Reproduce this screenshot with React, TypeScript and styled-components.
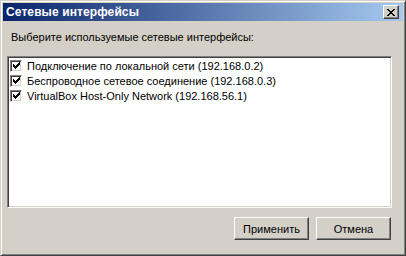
import React from "react";
import styled, { createGlobalStyle } from "styled-components";

const Global = createGlobalStyle`
  html, body { margin: 0; padding: 0; background: #d4d0c8; }
  body { font-family: "Liberation Sans", Arial, sans-serif; font-size: 11px; }
`;

const Window = styled.div`
  width: 406px;
  height: 256px;
  box-sizing: border-box;
  background: #d4d0c8;
  border-top: 1px solid #d4d0c8;
  border-left: 1px solid #d4d0c8;
  border-right: 1px solid #404040;
  border-bottom: 1px solid #404040;
  box-shadow: inset 1px 1px 0 #ffffff, inset -1px -1px 0 #808080;
  padding: 2px;
  display: flex;
  flex-direction: column;
`;

const TitleBar = styled.div`
  height: 18px;
  background: linear-gradient(to right, #0a246a, #a6caf0);
  display: flex;
  align-items: center;
  justify-content: space-between;
  padding: 0 4px 0 3px;
`;

const Title = styled.span`
  color: #fff;
  font-family: "Liberation Sans", Arial, sans-serif;
  font-weight: bold;
  font-size: 12px;
  letter-spacing: 0.1px;
`;

const CloseBtn = styled.div`
  width: 16px;
  height: 14px;
  box-sizing: border-box;
  background: #d4d0c8;
  border-top: 1px solid #fff;
  border-left: 1px solid #fff;
  border-right: 1px solid #404040;
  border-bottom: 1px solid #404040;
  box-shadow: inset -1px -1px 0 #808080;
  display: flex;
  align-items: center;
  justify-content: center;
`;

const Body = styled.div`
  flex: 1;
  display: flex;
  flex-direction: column;
  padding: 9px 11px 13px 4px;
`;

const Label = styled.div`
  font-family: "Liberation Sans", Arial, sans-serif;
  font-size: 11px;
  color: #000;
  padding-left: 4px;
  height: 15px;
  line-height: 15px;
`;

const ListBox = styled.div`
  margin-top: 11px;
  height: 152px;
  box-sizing: border-box;
  background: #fff;
  border-top: 1px solid #808080;
  border-left: 1px solid #808080;
  border-right: 1px solid #fff;
  border-bottom: 1px solid #fff;
  box-shadow: inset 1px 1px 0 #404040, inset -1px -1px 0 #d4d0c8;
  padding: 1px 2px;
  display: flex;
  flex-direction: column;
`;

const Item = styled.label`
  display: flex;
  align-items: center;
  height: 15px;
  gap: 5px;
  font-family: "Liberation Sans", Arial, sans-serif;
  font-size: 11px;
  color: #000;
`;

const Check = styled.span`
  width: 12px;
  height: 12px;
  flex: none;
  box-sizing: border-box;
  background: #fff;
  border-top: 1px solid #808080;
  border-left: 1px solid #808080;
  border-right: 1px solid #fff;
  border-bottom: 1px solid #fff;
  box-shadow: inset 1px 1px 0 #404040, inset -1px -1px 0 #d4d0c8;
  display: flex;
  align-items: center;
  justify-content: center;
`;

const Footer = styled.div`
  margin-top: auto;
  display: flex;
  justify-content: flex-end;
  gap: 7px;
  padding-right: 1px;
`;

const Button = styled.button`
  width: 75px;
  height: 23px;
  box-sizing: border-box;
  background: #d4d0c8;
  border-top: 1px solid #fff;
  border-left: 1px solid #fff;
  border-right: 1px solid #404040;
  border-bottom: 1px solid #404040;
  box-shadow: inset -1px -1px 0 #808080;
  font-family: "Liberation Sans", Arial, sans-serif;
  font-size: 11px;
  color: #000;
  padding: 0;
`;

const CheckMark = () => (
  <svg width="7" height="7" viewBox="0 0 7 7" shapeRendering="crispEdges">
    <path
      d="M0 2h1v3H0zM1 3h1v3H1zM2 4h1v3H2zM3 3h1v3H3zM4 2h1v3H4zM5 1h1v3H5zM6 0h1v3H6z"
      fill="#000"
    />
  </svg>
);

const items = [
  "Подключение по локальной сети (192.168.0.2)",
  "Беспроводное сетевое соединение (192.168.0.3)",
  "VirtualBox Host-Only Network (192.168.56.1)",
];

export default function App() {
  return (
    <>
      <Global />
      <Window>
        <TitleBar>
          <Title>Сетевые интерфейсы</Title>
          <CloseBtn>
            <svg width="8" height="7" viewBox="0 0 8 7" shapeRendering="crispEdges">
              <path
                d="M0 0h2v1H0zM6 0h2v1H6zM1 1h2v1H1zM5 1h2v1H5zM2 2h4v1H2zM3 3h2v1H3zM2 4h4v1H2zM1 5h2v1H1zM5 5h2v1H5zM0 6h2v1H0zM6 6h2v1H6z"
                fill="#000"
              />
            </svg>
          </CloseBtn>
        </TitleBar>
        <Body>
          <Label>Выберите используемые сетевые интерфейсы:</Label>
          <ListBox>
            {items.map((t) => (
              <Item key={t}>
                <Check>
                  <CheckMark />
                </Check>
                {t}
              </Item>
            ))}
          </ListBox>
          <Footer>
            <Button>Применить</Button>
            <Button>Отмена</Button>
          </Footer>
        </Body>
      </Window>
    </>
  );
}
